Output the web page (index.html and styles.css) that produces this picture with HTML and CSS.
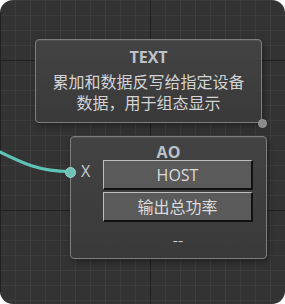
FILE: index.html
```html
<!DOCTYPE html>
<html lang="zh-CN">
  <head>
    <meta charset="UTF-8" />
    <meta name="viewport" content="width=device-width, initial-scale=1.0" />
    <title>Node editor</title>
    <link rel="stylesheet" href="styles.css">
  </head>
  <body>
    <div class="canvas">
      <svg class="links" width="285" height="304" viewBox="0 0 285 304">
        <path d="M -4 150 C 24 164, 40 171.5, 70 171.5" />
      </svg>

      <div class="node node-text">
        <div class="node-title">TEXT</div>
        <div class="node-desc">
          <div class="desc-line">累加和数据反写给指定设备</div>
          <div class="desc-line">数据，用于组态显示</div>
        </div>
        <span class="port port-out"></span>
      </div>

      <div class="node node-ao">
        <div class="node-title">AO</div>
        <div class="node-body">
          <div class="inputs">
            <span class="port port-in"></span>
            <span class="input-label">X</span>
          </div>
          <div class="fields">
            <div class="field">HOST</div>
            <div class="field">输出总功率</div>
            <div class="node-value">--</div>
          </div>
        </div>
      </div>
    </div>
  </body>
</html>
```

FILE: styles.css
```css
body {
  margin: 0;
  padding: 0;
  background-color: #fff;
  font-family: "Noto Sans CJK SC", "Noto Sans", sans-serif;
}

.canvas {
  position: relative;
  width: 285px;
  height: 304px;
  border-radius: 13px;
  overflow: hidden;
  background-color: #333;
  background-image:
    linear-gradient(to right, #202020 1px, transparent 1px),
    linear-gradient(to bottom, #202020 1px, transparent 1px),
    linear-gradient(to right, #3d3d3d 1px, transparent 1px),
    linear-gradient(to bottom, #3d3d3d 1px, transparent 1px);
  background-size: 150px 150px, 150px 150px, 15px 15px, 15px 15px;
  background-position: 0 0, 0 60px, 0 0, 0 0;
}

.links {
  position: absolute;
  top: 0;
  left: 0;
}

.links path {
  fill: none;
  stroke: #5ec4b7;
  stroke-width: 3;
}

/* Nodes */
.node {
  position: absolute;
  box-sizing: border-box;
  border: 1.5px solid #7e7e7e;
  border-radius: 4px;
  background: linear-gradient(to bottom, rgba(68, 68, 68, 0.92), rgba(58, 58, 58, 0.92));
  box-shadow: 2px 3px 6px rgba(0, 0, 0, 0.35), inset 0 1px 0 rgba(255, 255, 255, 0.08);
  color: #d2d2d2;
  text-align: center;
}

.node-title {
  font-family: "Open Sans", "Noto Sans CJK SC", sans-serif;
  font-weight: 700;
  font-size: 16px;
  color: #bcc2c8;
}

.node-text {
  left: 35px;
  top: 39px;
  width: 227px;
  height: 84px;
}

.node-text .node-title {
  line-height: 20px;
  padding-top: 7px;
}

.node-desc {
  margin-top: 4px;
  font-size: 16px;
  color: #d4d4d4;
}

.desc-line {
  height: 21px;
  line-height: 21px;
}

.node-ao {
  left: 70px;
  top: 136px;
  width: 197px;
  height: 123px;
}

.node-ao .node-title {
  line-height: 16px;
  padding-top: 7px;
}

.node-body {
  display: flex;
}

.inputs {
  width: 32px;
  height: 22px;
  display: flex;
  align-items: center;
}

.input-label {
  font-family: "Open Sans", sans-serif;
  font-size: 16px;
  color: #c8ccd0;
  margin-left: 10px;
}

.fields {
  width: 150px;
  display: flex;
  flex-direction: column;
  gap: 2px;
}

.field {
  box-sizing: border-box;
  height: 30px;
  padding-top: 1px;
  line-height: 26px;
  background-color: #5a5a5a;
  border-top: 1px solid #bdbdbd;
  border-left: 1px solid #bdbdbd;
  border-bottom: 2px solid #111;
  border-right: 2px solid #111;
  font-family: "Open Sans", "Noto Sans CJK SC", sans-serif;
  font-size: 16px;
  color: #dcdcdc;
}

.node-value {
  margin-top: 6px;
  font-size: 15px;
  line-height: 20px;
  color: #d0d0d0;
}

/* Ports */
.port {
  position: absolute;
  border-radius: 50%;
  box-sizing: border-box;
}

.port-out {
  right: -5.5px;
  bottom: -5.5px;
  width: 9px;
  height: 9px;
  background-color: #8a8a8a;
  border: 1px solid #9a9a9a;
}

.port-in {
  left: -6.5px;
  top: 30px;
  width: 11px;
  height: 11px;
  background-color: #6dc1b7;
  border: 1px solid #9ad6ce;
}
```
